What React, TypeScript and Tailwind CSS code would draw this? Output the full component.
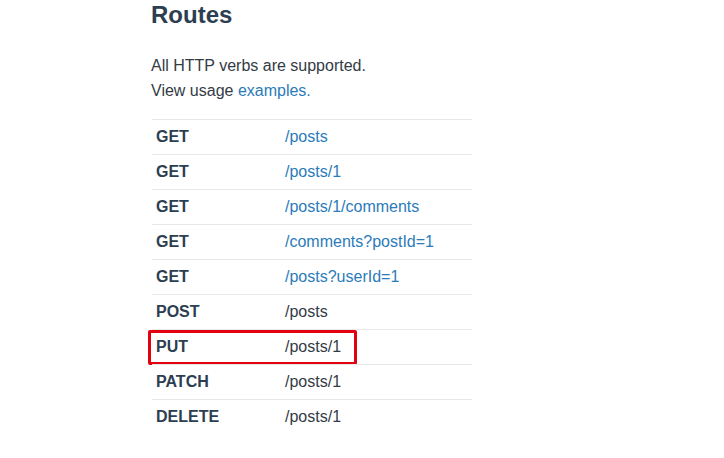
import React from "react";

const rows: { m: string; p: string; link: boolean; hl?: boolean }[] = [
  { m: "GET", p: "/posts", link: true },
  { m: "GET", p: "/posts/1", link: true },
  { m: "GET", p: "/posts/1/comments", link: true },
  { m: "GET", p: "/comments?postId=1", link: true },
  { m: "GET", p: "/posts?userId=1", link: true },
  { m: "POST", p: "/posts", link: false },
  { m: "PUT", p: "/posts/1", link: false, hl: true },
  { m: "PATCH", p: "/posts/1", link: false },
  { m: "DELETE", p: "/posts/1", link: false },
];

export default function App() {
  return (
    <div
      className="w-[724px] h-[458px] bg-white overflow-hidden"
      style={{ fontFamily: '"Liberation Sans", Arial, sans-serif' }}
    >
      <div className="ml-[151px] w-[321px]">
        <h2 className="text-[24px] leading-[30px] font-bold text-[#2c3e50]">Routes</h2>
        <p className="mt-[23px] text-[16px] leading-[25px] text-[#333b45]">
          All HTTP verbs are supported.
          <br />
          View usage <span className="text-[#2b7bb9]">examples.</span>
        </p>
        <div className="mt-[16px] ml-[1px] w-[320px]">
          {rows.map((r, i) => (
            <div
              key={i}
              className="relative flex h-[35px] border-t border-[#e8e8e8] text-[16px] leading-[34px]"
            >
              <div className="w-[133px] pl-[4px] font-bold text-[#2c3e50]">{r.m}</div>
              <div className={r.link ? "text-[#2b7bb9]" : "text-[#333b45]"}>{r.p}</div>
              {r.hl && (
                <div className="absolute left-[-4px] top-0 w-[209px] h-[35px] border-[3px] border-[#e3000f] rounded-[2px]" />
              )}
            </div>
          ))}
        </div>
      </div>
    </div>
  );
}
